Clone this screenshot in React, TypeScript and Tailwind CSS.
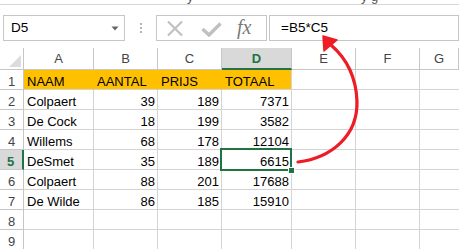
import React from "react";

const data: (string | number)[][] = [
  ["NAAM", "AANTAL", "PRIJS", "TOTAAL"],
  ["Colpaert", 39, 189, 7371],
  ["De Cock", 18, 199, 3582],
  ["Willems", 68, 178, 12104],
  ["DeSmet", 35, 189, 6615],
  ["Colpaert", 88, 201, 17688],
  ["De Wilde", 86, 185, 15910],
  ["", "", "", ""],
  ["", "", "", ""],
];

const cols = ["A", "B", "C", "D", "E", "F", "G"];

export default function App() {
  return (
    <div
      className="relative w-[459px] h-[249px] overflow-hidden bg-white text-black"
      style={{ fontFamily: '"Liberation Sans", Arial, sans-serif' }}
    >
      {/* title strip remnant */}
      <div className="relative h-[4px] overflow-hidden border-b border-[#d6d6d6] box-content text-[13px] leading-[15px] text-[#555]">
        <span className="absolute left-[187px] top-[-11px]">y</span>
        <span className="absolute left-[361px] top-[-11px]">y g</span>
      </div>

      {/* formula bar */}
      <div className="flex items-start pt-[10px] h-[43px]">
        <div className="ml-[3px] w-[122px] h-[26px] border border-[#c6c6c6] flex items-center justify-between pl-[7px] pr-[5px] text-[13.5px]">
          <span className="pt-[1px]">D5</span>
          <svg width="8" height="5" viewBox="0 0 8 5">
            <path d="M0.5 0.5 L7.5 0.5 L4 4.5 Z" fill="#666" />
          </svg>
        </div>
        <div className="w-[31px] h-[26px] flex flex-col items-center justify-center gap-[2px]">
          <div className="w-[2px] h-[2px] bg-[#b5b5b5]" />
          <div className="w-[2px] h-[2px] bg-[#b5b5b5]" />
          <div className="w-[2px] h-[2px] bg-[#b5b5b5]" />
        </div>
        <div className="w-[111px] h-[26px] border border-[#c6c6c6] flex items-center pl-[9px]">
          <svg width="18" height="17" viewBox="0 0 18 17" className="mt-[1px]">
            <path d="M2 1.5 L16 15.5 M16 1.5 L2 15.5" stroke="#c0c0c0" strokeWidth="2.2" />
          </svg>
          <svg width="21" height="15" viewBox="0 0 21 15" className="ml-[17px] mt-[3px]">
            <path d="M1.5 7 L8 13 L19.5 1.5" stroke="#c0c0c0" strokeWidth="3.4" fill="none" />
          </svg>
          <span
            className="ml-[15px] text-[20px] italic text-[#7a7a7a] leading-none -mt-[2px]"
            style={{ fontFamily: '"Liberation Serif", "Times New Roman", serif' }}
          >
            fx
          </span>
        </div>
        <div className="ml-[2px] flex-1 h-[26px] border border-[#c6c6c6] flex items-center pl-[11px] text-[13.5px]">
          <span className="pt-[1px]">=B5*C5</span>
        </div>
      </div>

      {/* grid */}
      <div className="grid grid-cols-[24px_70px_64px_64px_70px_64px_64px_1fr] text-[13px] leading-[15px]">
        {/* header row */}
        <div className="h-[22px] border-r border-b border-[#c6c6c6] flex items-end justify-end pr-[2px] pb-[2px]">
          <svg width="12" height="12" viewBox="0 0 12 12">
            <path d="M12 0 L12 12 L0 12 Z" fill="#dcdcdc" />
          </svg>
        </div>
        {cols.map((c) =>
          c === "D" ? (
            <div
              key={c}
              className="h-[22px] border-r border-r-[#c6c6c6] border-b-2 border-b-[#217346] bg-[#d9d9d9] text-[#217346] font-bold flex items-end justify-center pb-[2px]"
            >
              {c}
            </div>
          ) : (
            <div
              key={c}
              className="h-[22px] border-r border-b border-[#c6c6c6] text-[#444] flex items-end justify-center pb-[3px]"
            >
              {c}
            </div>
          )
        )}

        {data.map((row, ri) => {
          const rn = ri + 1;
          const isSel = rn === 5;
          return (
            <React.Fragment key={ri}>
              {isSel ? (
                <div className="h-[20px] border-r-2 border-r-[#217346] border-b border-b-[#c6c6c6] bg-[#d9d9d9] text-[#217346] font-bold flex items-end justify-center pr-[1px]">
                  {rn}
                </div>
              ) : (
                <div className="h-[20px] border-r border-b border-[#c6c6c6] text-[#444] flex items-end justify-center">
                  {rn}
                </div>
              )}
              {row.map((v, ci) => {
                const yellow = rn === 1;
                const num = typeof v === "number";
                const rightYellow = yellow && ci < 3;
                return (
                  <div
                    key={ci}
                    className={
                      "h-[20px] border-b border-b-[#d4d4d4] border-r flex items-end whitespace-nowrap " +
                      (rightYellow ? "border-r-[#ffc000] " : "border-r-[#d4d4d4] ") +
                      (yellow ? "bg-[#ffc000] " : "") +
                      (num ? "justify-end pr-[2px]" : "pl-[3px]")
                    }
                  >
                    {v}
                  </div>
                );
              })}
              <div className="h-[20px] border-r border-b border-[#d4d4d4]" />
              <div className="h-[20px] border-r border-b border-[#d4d4d4]" />
              <div className="h-[20px] border-b border-[#d4d4d4]" />
            </React.Fragment>
          );
        })}
      </div>

      {/* selection D5 */}
      <div className="absolute left-[220px] top-[148px] w-[72px] h-[23px] border-2 border-[#217346] pointer-events-none" />
      <div className="absolute left-[288px] top-[167px] w-[7px] h-[7px] bg-[#217346] border border-white" />

      {/* red arrow */}
      <svg className="absolute left-0 top-0 pointer-events-none" width="459" height="249" viewBox="0 0 459 249">
        <path
          d="M298 162 C331 158 358 136 357 101 C356 76 346 58 331 45"
          stroke="#ee1c25"
          strokeWidth="3.2"
          fill="none"
          strokeLinecap="round"
        />
        <path d="M323 36 L337 40 L324 51 Z" fill="#ee1c25" stroke="#ee1c25" strokeWidth="1.5" strokeLinejoin="round" />
      </svg>
    </div>
  );
}
